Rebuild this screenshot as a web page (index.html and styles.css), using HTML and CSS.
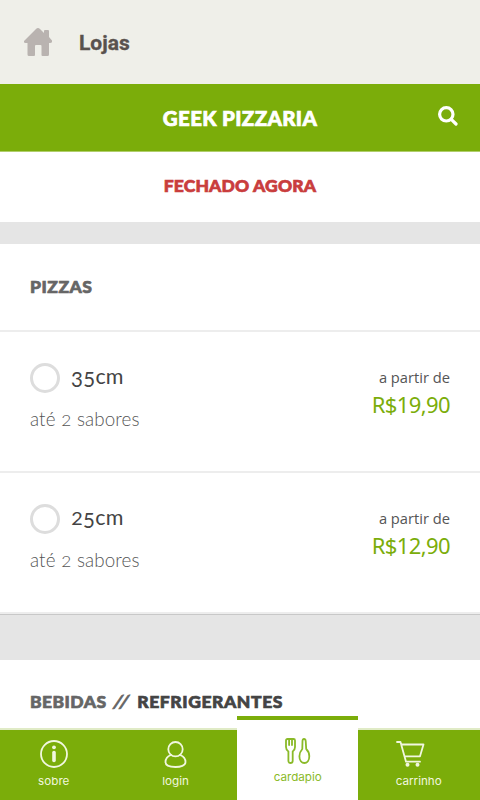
FILE: index.html
```html
<!DOCTYPE html>
<html lang="pt-BR">
<head>
<meta charset="utf-8">
<title>Geek Pizzaria</title>
<link rel="stylesheet" href="styles.css">
</head>
<body>
<div class="app">
  <header class="topbar">
    <svg class="home" width="28" height="28" viewBox="0 0 28 28"><path d="M14 0Q15 0 16 1L20 5V3Q20 2 21 2H24Q25 2 25 3V9L28 12.500Q28.500 15 26 15H25V26.500Q25 28 23.500 28H18.500Q17.500 28 17.500 27V18Q17.500 17 16.500 17H12Q11 17 11 18V27Q11 28 10 28H5Q3.500 28 3.500 26.500V15H1.500Q-.5 15 0 13L12 1Q13 0 14 0Z"/></svg>
    <span class="topbar-title">Lojas</span>
  </header>
  <div class="brand">
    <h1 class="brand-name">GEEK PIZZARIA</h1>
    <svg class="search" width="20" height="20" viewBox="0 0 20 20"><circle cx="8.300" cy="8.300" r="6.700"/><path d="M13.300 13.300L18 18"/></svg>
  </div>
  <div class="status"><span class="status-text">FECHADO AGORA</span></div>
  <main>
    <section class="group">
      <h2 class="group-title">PIZZAS</h2>
      <div class="item">
        <div class="choice">
          <div class="option"><span class="radio"></span><span class="size"><span class="num">35</span>cm</span></div>
          <div class="note">até <span class="small-num">2</span> sabores</div>
        </div>
        <div class="cost"><span class="from">a partir de</span><span class="price">R$19,90</span></div>
      </div>
      <div class="item">
        <div class="choice">
          <div class="option"><span class="radio"></span><span class="size"><span class="small-num">2</span><span class="num">5</span>cm</span></div>
          <div class="note">até <span class="small-num">2</span> sabores</div>
        </div>
        <div class="cost"><span class="from">a partir de</span><span class="price">R$12,90</span></div>
      </div>
    </section>
    <section class="drinks">
      <h2 class="drinks-title"><span class="category">BEBIDAS <span class="slashes">//</span></span> REFRIGERANTES</h2>
    </section>
  </main>
  <nav class="tabs">
    <a class="tab tab-about">
      <svg class="icon" width="30" height="30" viewBox="0 0 30 30"><circle cx="15" cy="15" r="13"/><path d="M15 13.500V21.500" stroke-width="3.600"/><circle cx="15" cy="8.300" r="1.900" fill="currentColor" stroke="none"/></svg>
      <span class="label">sobre</span>
    </a>
    <a class="tab tab-login">
      <svg class="icon" width="30" height="30" viewBox="0 0 30 30"><circle cx="14.500" cy="10.200" r="7.200"/><path d="M10 16C6.500 17.300 4.500 20.300 4.500 23C4.500 26.500 9.500 28 14.500 28S24.500 26.500 24.500 23C24.500 20.300 22.500 17.300 19 16"/></svg>
      <span class="label">login</span>
    </a>
    <a class="tab tab-menu">
      <svg class="icon fork" width="30" height="30" viewBox="0 0 30 30"><path d="M4 4.500Q4 3 5.500 3H11.500Q13 3 13 4.500V11Q13 14 10.700 15.500V25Q10.600 27 8.600 27T6.400 25V15.500Q4 14 4 11ZM7.100 3.500V9M10 3.500V9"/><path d="M20.500 5Q20.500 3 22 3T23.700 5L24.200 13C26.300 15 27.300 17.800 27.300 20.300C27.300 24.300 25.200 27 22.400 27S17.400 24.300 17.400 20.300C17.400 17.800 18.500 15 20.300 13Z"/></svg>
      <span class="label">cardapio</span>
    </a>
    <a class="tab tab-cart">
      <svg class="icon cart" width="30" height="30" viewBox="0 0 30 30"><path d="M1 3H4.500L10 22.700H24M6 5.500H27.500L24 17.300H9"/><circle cx="11.500" cy="25.700" r="2" fill="currentColor" stroke="none"/><circle cx="21.500" cy="25.700" r="2" fill="currentColor" stroke="none"/></svg>
      <span class="label">carrinho</span>
    </a>
  </nav>
</div>
</body>
</html>
```
FILE: styles.css
```css
* { box-sizing: border-box; }
body { margin: 0; background: #e5e5e5; font-family: Lato, sans-serif; color: #444; }
h1, h2 { margin: 0; font-weight: 900; white-space: nowrap; -webkit-text-stroke: .7px currentColor; }
.app { height: 800px; overflow: hidden; display: flex; flex-direction: column; position: relative; }
.topbar { height: 84px; flex: none; background: #efefe9; display: flex; align-items: center; padding-left: 24px; gap: 27px; }
.home { fill: #b9b3b0; }
.topbar-title { font: 700 21px/26px Roboto, sans-serif; color: #59524e; padding-top: 1px; -webkit-text-stroke: .3px #59524e; }
.brand { height: 68px; flex: none; background: #7bad0a; border-bottom: 1px solid #b0ce6c; display: grid; grid-template-columns: 1fr auto 1fr; align-items: center; padding: 0 22px; }
.brand-name { grid-column: 2; color: #fff; font-size: 20.5px; line-height: 24px; padding-top: 1px; letter-spacing: .35px; }
.search { justify-self: end; margin-bottom: 4px; fill: none; stroke: #fff; stroke-width: 3.2; stroke-linecap: round; }
.status { height: 70px; flex: none; background: #fff; text-align: center; padding-top: 23px; font-size: 17.5px; font-weight: 900; line-height: 22px; color: #c93d3d; letter-spacing: .15px; -webkit-text-stroke: .7px currentColor; }
.group { margin-top: 22px; background: #fff; border-bottom: 1px solid #c8c8c8; }
.group-title { height: 86px; padding: 32px 30px 0; font-size: 17.5px; line-height: 22px; color: #666; letter-spacing: .5px; }
.item { height: 141px; border-top: 2px solid #ededed; display: flex; justify-content: space-between; padding: 31px 30px 0; }
.item:last-child { height: 143px; border-bottom: 2px solid #ededed; }
.option { display: flex; align-items: center; gap: 11px; height: 30px; }
.radio { width: 30px; height: 30px; border: 3px solid #ddd; border-radius: 50%; }
.size { font-size: 21.5px; line-height: 26px; height: 31px; color: #444; letter-spacing: .1px; }
.num { display: inline-block; font-size: .95em; line-height: 20px; vertical-align: -3px; letter-spacing: .4px; }
.small-num { font-size: .8em; display: inline-block; transform: scaleX(1.15); margin: 0 1px; }
.note { font-size: 18.8px; line-height: 24px; margin-top: 14px; color: #555; font-weight: 300; white-space: nowrap; letter-spacing: .13px; }
.cost { font-family: "Open Sans", sans-serif; display: flex; flex-direction: column; align-items: flex-end; padding-top: 3px; }
.from { font-size: 14.7px; line-height: 22px; color: #555; }
.price { font-family: "Noto Sans", sans-serif; font-size: 22px; line-height: 30px; color: #7bad0a; margin-top: 1px; letter-spacing: -.6px; }
.drinks { margin-top: 45px; background: #fff; height: 140px; padding: 31px 30px 0; }
.drinks-title { font-size: 17.5px; line-height: 22px; color: #444; letter-spacing: .58px; }
.category { color: #666; letter-spacing: .45px; }
.slashes { display: inline-block; transform: skewX(-16deg); letter-spacing: 2px; margin: 0 2px 0 3px; }
.tabs { position: absolute; left: 0; right: 0; bottom: 0; display: grid; grid-template-columns: 115px 122px 121px 122px; align-items: end; }
.tab { height: 72px; background: #7bad0a; border-top: 2px solid #e0ebc6; color: #f1f7df; display: flex; flex-direction: column; align-items: center; padding-top: 9px; }
.tab-about { padding-right: 8px; }
.tab-menu { height: 84px; background: #fff; border-top: 4px solid #7bad0a; color: #8aba28; padding-top: 16px; }
.icon { fill: none; stroke: currentColor; stroke-width: 1.8; stroke-linecap: round; stroke-linejoin: round; }
.fork { margin-right: 1px; }
.cart { margin-right: 17px; }
.label { font: 400 11px/16px Inter, sans-serif; margin-top: 4px; transform: scaleX(1.06); }
.tab-menu .label { margin-top: 3px; }
```
